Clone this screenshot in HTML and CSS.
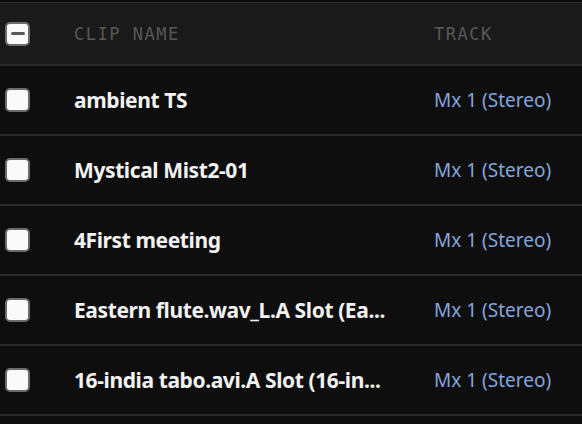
FILE: index.html
```html
<!DOCTYPE html>
<html>
<head>
<meta charset="utf-8">
<link rel="stylesheet" href="styles.css">
</head>
<body>
<div class="table">
  <div class="row head">
    <div class="cell check"><span class="box mixed"><span class="dash"></span></span></div>
    <div class="cell name">CLIP NAME</div>
    <div class="cell track">TRACK</div>
  </div>
  <div class="row">
    <div class="cell check"><span class="box"></span></div>
    <div class="cell name">ambient TS</div>
    <div class="cell track">Mx 1 (Stereo)</div>
  </div>
  <div class="row">
    <div class="cell check"><span class="box"></span></div>
    <div class="cell name">Mystical Mist2-01</div>
    <div class="cell track">Mx 1 (Stereo)</div>
  </div>
  <div class="row">
    <div class="cell check"><span class="box"></span></div>
    <div class="cell name">4First meeting</div>
    <div class="cell track">Mx 1 (Stereo)</div>
  </div>
  <div class="row">
    <div class="cell check"><span class="box"></span></div>
    <div class="cell name">Eastern flute.wav_L.A Slot (Ea...</div>
    <div class="cell track">Mx 1 (Stereo)</div>
  </div>
  <div class="row">
    <div class="cell check"><span class="box"></span></div>
    <div class="cell name">16-india tabo.avi.A Slot (16-in...</div>
    <div class="cell track">Mx 1 (Stereo)</div>
  </div>
</div>
</body>
</html>
```
FILE: styles.css
```css
html, body {
  margin: 0;
  padding: 0;
  background: #0e0e0e;
  height: 100%;
  overflow: hidden;
}
.table {
  padding-top: 2px;
  font-family: "Noto Sans", sans-serif;
}
.row {
  display: grid;
  grid-template-columns: 74px 360px 1fr;
  align-items: center;
  height: 68px;
  border-bottom: 2px solid #2a2a2a;
  background: #0e0e0e;
}
.row.head {
  height: 61px;
  background: #1a1a1a;
  border-top: 1px solid #2e2e2e;
}
.cell.check {
  padding-left: 5px;
  display: flex;
  align-items: center;
}
.box {
  box-sizing: border-box;
  width: 25px;
  height: 24px;
  background: #fafafa;
  border: 2px solid #6b6b6b;
  border-radius: 5px;
  display: flex;
  align-items: center;
  justify-content: center;
}
.dash {
  width: 14px;
  height: 3px;
  border-radius: 2px;
  background: #5a5a5a;
}
.name {
  color: #f2f2f2;
  font-weight: 700;
  font-size: 21px;
  letter-spacing: -0.4px;
  white-space: nowrap;
  overflow: hidden;
  min-width: 0;
}
.track {
  color: #86a6dc;
  font-size: 19px;
  white-space: nowrap;
}
.head .name, .head .track {
  font-family: "DejaVu Sans Mono", monospace;
  font-weight: 400;
  font-size: 17px;
  color: #585858;
  letter-spacing: 1.5px;
}
```
